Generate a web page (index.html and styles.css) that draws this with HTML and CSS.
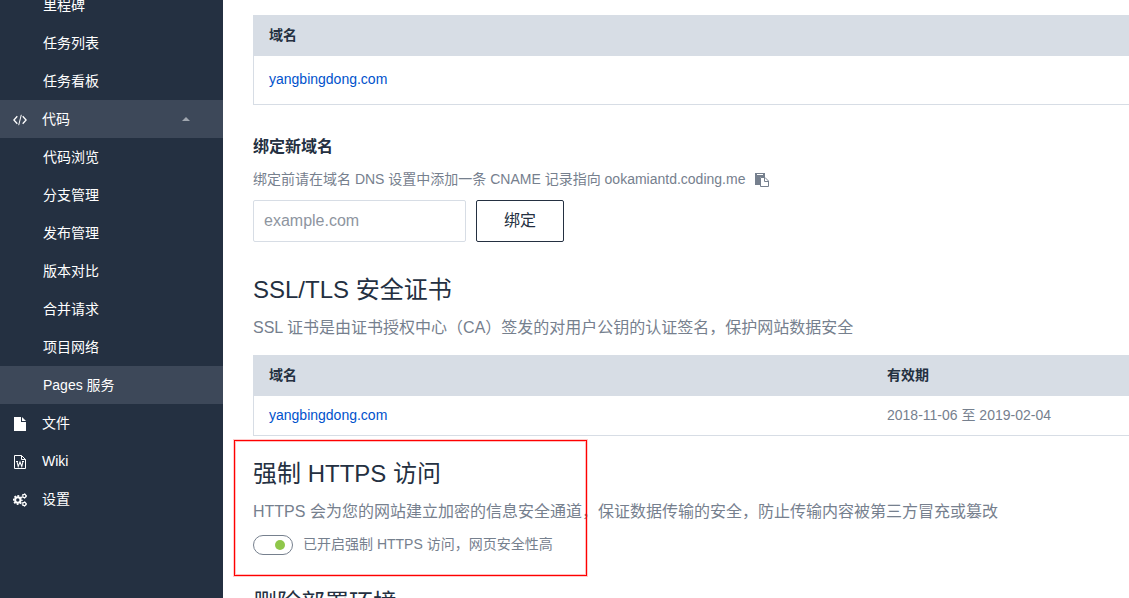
FILE: index.html
```html
<!DOCTYPE html>
<html lang="zh-CN">
<head>
<meta charset="utf-8">
<title>Pages 服务</title>
<link rel="stylesheet" href="styles.css">
</head>
<body>
<div class="app">
  <nav class="sidebar">
    <a class="item sub">里程碑</a>
    <a class="item sub">任务列表</a>
    <a class="item sub">任务看板</a>
    <a class="item active">
      <svg class="icon" viewBox="0 0 14 14" fill="none" stroke="currentColor" stroke-width="1.3"><path d="M4.3 3.2.9 7l3.400 3.800M9.700 3.200 13.100 7l-3.400 3.800"/><path d="M8.300 1.800 5.700 12.200" stroke-width="1"/></svg>
      <span>代码</span><i class="caret"></i>
    </a>
    <a class="item sub">代码浏览</a>
    <a class="item sub">分支管理</a>
    <a class="item sub">发布管理</a>
    <a class="item sub">版本对比</a>
    <a class="item sub">合并请求</a>
    <a class="item sub">项目网络</a>
    <a class="item sub active">Pages 服务</a>
    <a class="item">
      <svg class="icon" viewBox="0 0 14 14" fill="currentColor"><path d="M1 0h7v5h5v9H1zM9 0l4 4H9z"/></svg>
      <span>文件</span>
    </a>
    <a class="item">
      <svg class="icon" viewBox="0 0 14 14" fill="none" stroke="currentColor"><path d="M1.5.5h7l4 4v9h-11zM8.5.5v4h4"/><path d="M3 6.500h2M9 6.500h2M4 6.500l1.200 5L7 7l1.800 4.500L10 6.500" stroke-width="1.050"/></svg>
      <span>Wiki</span>
    </a>
    <a class="item">
      <svg class="icon" viewBox="0 0 14 14" fill="none" stroke="currentColor"><circle cx="4.800" cy="7" r="2.700" stroke-width="2"/><circle cx="4.800" cy="7" r="4.100" stroke-width="1.600" stroke-dasharray="1.800 1.420" stroke-dashoffset=".9"/><circle cx="11.300" cy="3" r="1.600" stroke-width="1.200"/><circle cx="11.300" cy="3" r="2.300" stroke-width=".9" stroke-dasharray="1.200 1.200"/><circle cx="11.300" cy="11" r="1.600" stroke-width="1.200"/><circle cx="11.300" cy="11" r="2.300" stroke-width=".9" stroke-dasharray="1.200 1.200"/></svg>
      <span>设置</span>
    </a>
  </nav>
  <main class="content">
    <section class="table domains">
      <div class="row head"><span>域名</span></div>
      <div class="row"><a class="link">yangbingdong.com</a></div>
    </section>
    <h3 class="subtitle">绑定新域名</h3>
    <p class="hint">绑定前请在域名 DNS 设置中添加一条 CNAME 记录指向 ookamiantd.coding.me
      <svg class="copy" viewBox="0 0 14 14"><path fill="currentColor" d="M0 0h10v4H5v8H0z"/><path fill="#fff" d="M2 1h6v1H2z"/><path fill="#fff" stroke="currentColor" d="M5.500 4.500h4.500l3.500 3.500v5.500h-8z"/><path fill="none" stroke="currentColor" d="M9.500 4.500v4h4"/></svg>
    </p>
    <form class="bind">
      <input class="field" type="text" placeholder="example.com">
      <button class="button" type="button">绑定</button>
    </form>
    <h2 class="title">SSL/TLS 安全证书</h2>
    <p class="desc">SSL 证书是由证书授权中心（CA）签发的对用户公钥的认证签名，保护网站数据安全</p>
    <section class="table certificates">
      <div class="row head"><span>域名</span><span>有效期</span></div>
      <div class="row"><a class="link">yangbingdong.com</a><span>2018-11-06 至 2019-02-04</span></div>
    </section>
    <section class="https">
      <h2 class="title">强制 HTTPS 访问</h2>
      <p class="desc">HTTPS 会为您的网站建立加密的信息安全通道，保证数据传输的安全，防止传输内容被第三方冒充或篡改</p>
      <div class="switch-row"><span class="switch"></span><span>已开启强制 HTTPS 访问，网页安全性高</span></div>
      <div class="highlight"></div>
    </section>
    <h2 class="title">删除部署环境</h2>
  </main>
</div>
</body>
</html>
```

FILE: styles.css
```css
* { box-sizing: border-box; }
body {
  margin: 0;
  background: #fff;
  color: #76808e;
  font: 14px/20px "Liberation Sans", "Noto Sans CJK SC", sans-serif;
}
h2, h3, p { margin: 0; }
.app { display: flex; height: 598px; overflow: hidden; }
.sidebar { flex: 0 0 223px; background: #243041; color: #fff; overflow: hidden; }
.item { display: flex; align-items: center; height: 38px; padding-left: 13px; }
.item:first-child { margin-top: -14px; }
.sub { padding-left: 43px; }
.active { background: #3d4859; }
.icon { width: 14px; height: 14px; margin: 2px 15px 0 0; }
.caret {
  margin: 0 33px 0 auto;
  border: solid transparent;
  border-width: 0 4px 4px;
  border-bottom-color: #a0a6af;
}
.content { flex: 0 0 906px; padding: 15px 0 0 30px; white-space: nowrap; }
.table { border: solid #d7dde5; border-width: 0 0 1px 1px; }
.row { display: grid; grid-template-columns: 618px 1fr; align-items: center; height: 39px; padding: 0 0 2px 15px; }
.head { height: 41px; background: #d7dde5; color: #243041; font-weight: bold; }
.domains .row:last-child { height: 48px; }
.link { color: #0052cc; }
.subtitle { margin-top: 30px; color: #243041; font-size: 16px; line-height: 24px; }
.hint { display: flex; align-items: center; margin-top: 10px; }
.copy { width: 14px; height: 14px; margin: 1px 0 0 10px; }
.bind { display: flex; gap: 10px; margin-top: 11px; }
.field, .button { height: 42px; border-radius: 2px; background: #fff; font: inherit; font-size: 16px; }
.field { width: 213px; padding: 0 10px; border: 1px solid #d7dde5; }
.field::placeholder { color: #8e959f; }
.button { width: 88px; padding: 0; border: 1px solid #243041; color: #243041; }
.title { color: #243041; font-size: 24px; font-weight: normal; line-height: 36px; }
.bind + .title { margin-top: 30px; }
.desc { margin-top: 8px; font-size: 16px; line-height: 24px; }
.certificates { margin-top: 15px; }
.https { position: relative; height: 142px; padding-top: 20px; margin-bottom: 7px; }
.switch-row { display: flex; align-items: center; gap: 10px; margin-top: 9px; }
.switch { display: flex; align-items: center; justify-content: flex-end; width: 40px; height: 20px; padding-right: 7px; border: 1px solid #76808e; border-radius: 10px; margin-top: 2px; }
.switch::after { content: ""; width: 10px; height: 10px; border-radius: 50%; background: #8fc74a; }
.highlight { position: absolute; top: 4px; left: -19px; width: 353px; height: 136px; border: 1px solid #f00; outline: 1px solid rgba(255, 0, 0, .25); outline-offset: -2px; box-shadow: 0 0 0 1px rgba(255, 0, 0, .2); }
```
